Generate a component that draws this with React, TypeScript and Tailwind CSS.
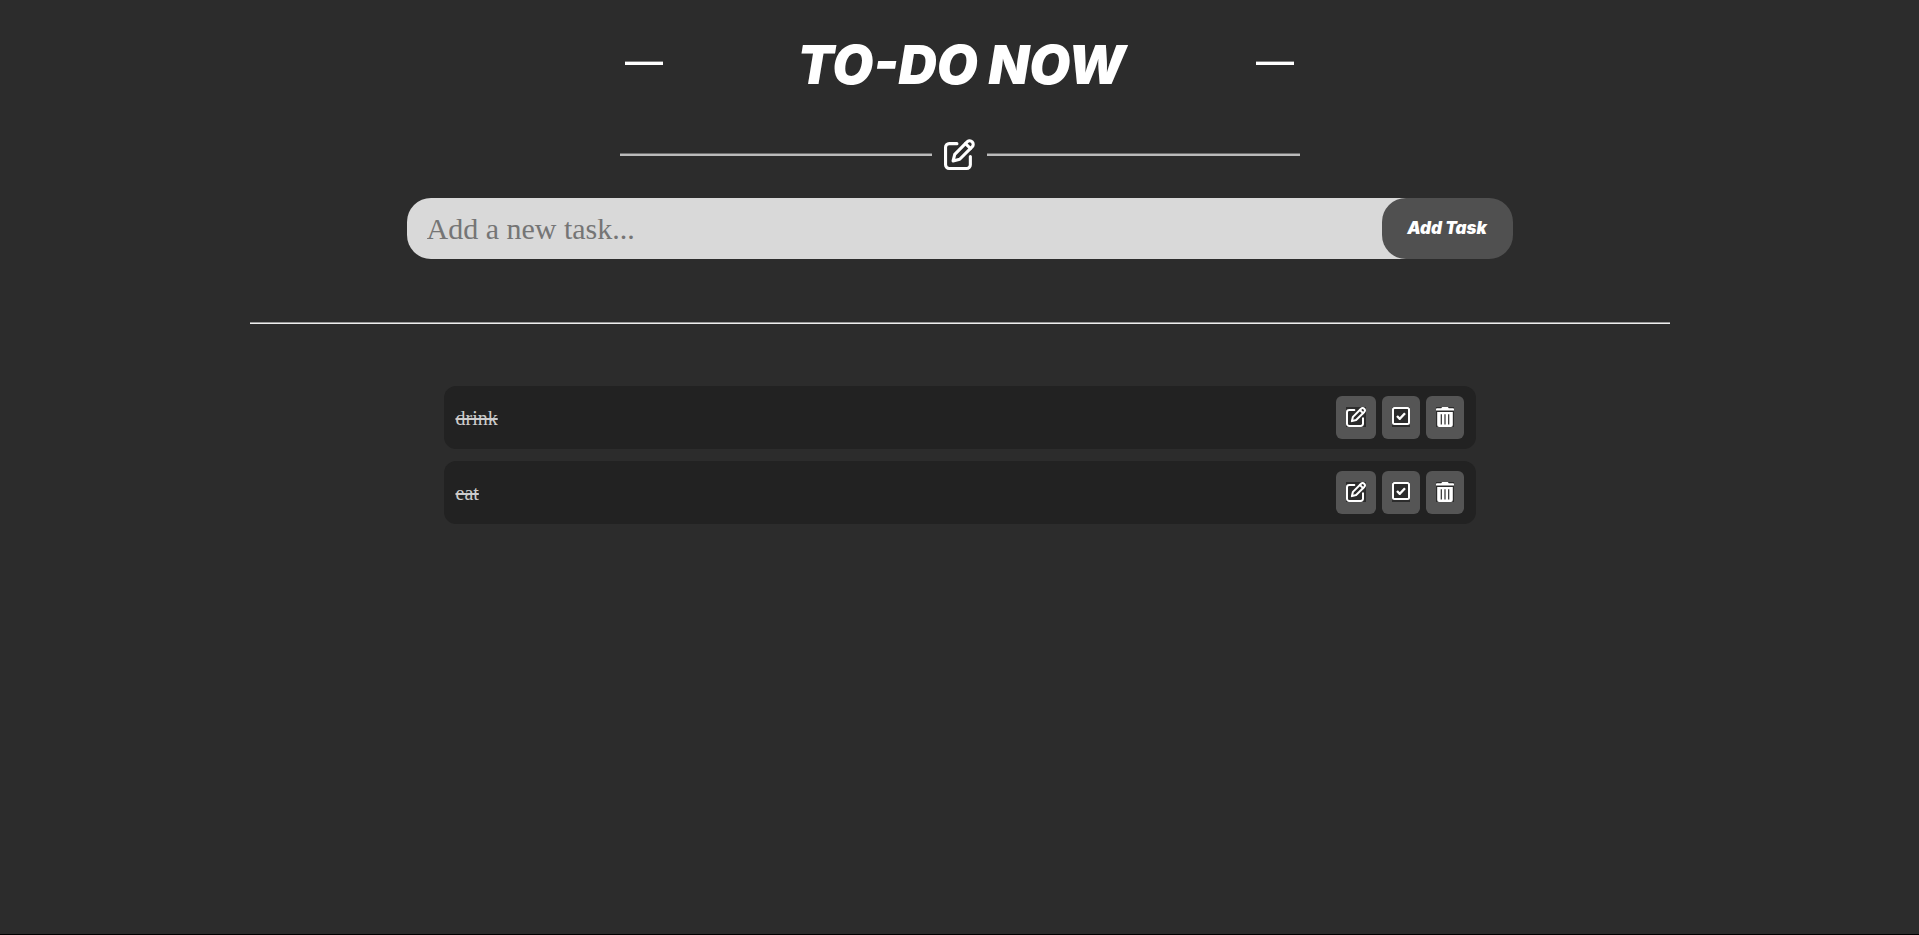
import { useState, type FormEvent } from "react";

type Task = { id: number; text: string; done: boolean };

const initialTasks: Task[] = [
  { id: 1, text: "drink", done: true },
  { id: 2, text: "eat", done: true },
];

function EditIcon({ className }: { className: string }) {
  return (
    <svg
      viewBox="0 0 30 30"
      className={className}
      fill="none"
      stroke="currentColor"
      strokeWidth="3"
      strokeLinecap="round"
      strokeLinejoin="round"
      aria-hidden="true"
    >
      <path d="M12.5 4.5H5a3.5 3.5 0 0 0-3.5 3.5v17a3.5 3.5 0 0 0 3.5 3.5h17a3.5 3.5 0 0 0 3.5-3.5V17" />
      <path d="M8.8 21.2l1.6-6.4L22.6 2.6a3.4 3.4 0 0 1 4.8 4.8L15.2 19.6z" />
      <path d="M20.8 4.4l4.8 4.8" />
    </svg>
  );
}

function CheckIcon({ className }: { className: string }) {
  return (
    <svg
      viewBox="0 0 18 20"
      className={className}
      fill="none"
      stroke="currentColor"
      strokeWidth="2"
      strokeLinejoin="round"
      aria-hidden="true"
    >
      <rect x="1" y="1" width="16" height="16" rx="1.5" />
      <path d="M5 9l2.8 2.8 5.2-5.6" strokeWidth="2.4" />
    </svg>
  );
}

function TrashIcon({ className }: { className: string }) {
  return (
    <svg
      viewBox="0 0 18 20"
      className={className}
      fill="currentColor"
      fillRule="evenodd"
      aria-hidden="true"
    >
      <path d="M6.2 0h5.6l1 1.3H17a1 1 0 0 1 1 1v1.3H0V2.3a1 1 0 0 1 1-1h4.2z" />
      <path d="M1.2 4.9h15.6V18a2 2 0 0 1-2 2H3.2a2 2 0 0 1-2-2zM4.7 7.2v10.3h1.2V7.2zM8.4 7.2v10.3h1.2V7.2zM12.1 7.2v10.3h1.2V7.2z" />
    </svg>
  );
}

const actionClass =
  "flex h-[43px] items-center rounded-md bg-[#555555] px-2.5 pb-0.5";
const iconBoxClass = "block bg-[#2c2c2c]";

export default function App() {
  const [tasks, setTasks] = useState(initialTasks);
  const [draft, setDraft] = useState("");

  const addTask = (event: FormEvent) => {
    event.preventDefault();
    const text = draft.trim();
    if (!text) return;
    setTasks([...tasks, { id: Date.now(), text, done: false }]);
    setDraft("");
  };

  const toggle = (id: number) =>
    setTasks(tasks.map((t) => (t.id === id ? { ...t, done: !t.done } : t)));

  const remove = (id: number) => setTasks(tasks.filter((t) => t.id !== id));

  const edit = (task: Task) => {
    setDraft(task.text);
    remove(task.id);
  };

  return (
    <main className="flex min-h-screen flex-col items-center border-b border-black bg-[#2c2c2c] px-4 font-['Liberation_Serif',serif] text-white">
      <header className="w-full max-w-[680px] pt-[31px]">
        <div className="flex items-center justify-between px-[5px]">
          <span className="h-1 w-[38px] border-t border-[#7d7d7d] bg-white" />
          <h1 className="pt-1 pl-1 font-['Inter',sans-serif] text-[53px] leading-15 font-black italic">
            TO-DO NOW
          </h1>
          <span className="h-1 w-[38px] border-t border-[#7d7d7d] bg-white" />
        </div>
        <div className="mt-11 flex items-center">
          <span className="h-[3px] grow border-t border-[#707070] bg-[#bbbbbb]" />
          <EditIcon className="mx-3 size-[31px]" />
          <span className="h-[3px] grow border-t border-[#707070] bg-[#bbbbbb]" />
        </div>
      </header>

      <form onSubmit={addTask} className="mt-7 flex w-full max-w-[1106px]">
        <input
          type="text"
          aria-label="New task"
          placeholder="Add a new task..."
          value={draft}
          onChange={(e) => setDraft(e.target.value)}
          className="h-[61px] min-w-0 grow rounded-l-3xl bg-[#d9d9d9] pr-10 pl-5 text-[30px] text-[#2c2c2c] outline-none placeholder:text-[#757575]"
        />
        <button
          type="submit"
          className="relative -ml-8 w-[131px] shrink-0 rounded-3xl bg-[#505050] font-['Inter',sans-serif] text-[17px] font-black italic"
        >
          Add Task
        </button>
      </form>

      <hr className="mt-[63px] h-0.5 w-full max-w-[1420px] border-t border-[#999999] bg-[#eeeeee]" />

      <ul className="mt-[62px] flex w-full max-w-[1032px] flex-col gap-3">
        {tasks.map((task) => (
          <li
            key={task.id}
            className="flex items-center justify-between rounded-xl bg-[#222222] px-3 py-2.5"
          >
            <span
              className={
                task.done
                  ? "text-xl leading-7 text-[#cccccc] line-through"
                  : "text-xl leading-7"
              }
            >
              {task.text}
            </span>
            <div className="flex gap-1.5">
              <button
                type="button"
                aria-label={`Edit ${task.text}`}
                onClick={() => edit(task)}
                className={actionClass}
              >
                <span className={iconBoxClass}>
                  <EditIcon className="size-5" />
                </span>
              </button>
              <button
                type="button"
                aria-label={`Complete ${task.text}`}
                onClick={() => toggle(task.id)}
                className={actionClass}
              >
                <span className={iconBoxClass}>
                  <CheckIcon className="h-5 w-[18px]" />
                </span>
              </button>
              <button
                type="button"
                aria-label={`Delete ${task.text}`}
                onClick={() => remove(task.id)}
                className={actionClass}
              >
                <span className={iconBoxClass}>
                  <TrashIcon className="h-5 w-[18px]" />
                </span>
              </button>
            </div>
          </li>
        ))}
      </ul>
    </main>
  );
}
